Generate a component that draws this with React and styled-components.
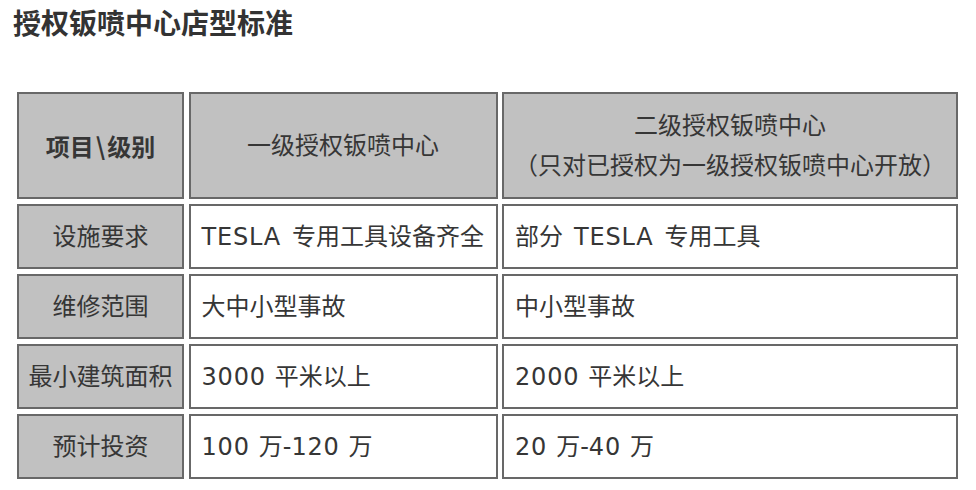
import React from "react";
import styled, { createGlobalStyle } from "styled-components";

const GlobalStyle = createGlobalStyle`
  html, body {
    margin: 0;
    padding: 0;
    background: #ffffff;
  }
  body {
    font-family: "DejaVu Sans", "Noto Sans CJK SC", sans-serif;
    color: #333333;
  }
`;

const Page = styled.div`
  width: 976px;
  height: 490px;
  box-sizing: border-box;
  padding: 2px 0 0 13px;
  overflow: hidden;
`;

const Title = styled.h1`
  margin: 0;
  font-family: "Noto Sans CJK SC", sans-serif;
  font-size: 28px;
  font-weight: 700;
  line-height: 40px;
  color: #333333;
`;

const Table = styled.div`
  display: grid;
  grid-template-columns: 167px 309px 456px;
  grid-template-rows: 107px repeat(4, 65px);
  column-gap: 4.5px;
  row-gap: 5px;
  margin: 50px 0 0 4px;
`;

const Cell = styled.div`
  box-sizing: border-box;
  border: 2px solid #686868;
  display: flex;
  flex-direction: column;
  justify-content: center;
  font-size: 24px;
  line-height: 40px;
  color: #363636;
  white-space: nowrap;
  background: ${(p) => (p.$shaded ? "#c1c1c1" : "#ffffff")};
  align-items: ${(p) => (p.$center ? "center" : "flex-start")};
  padding-left: ${(p) => (p.$center ? "0" : "11px")};
  font-weight: ${(p) => (p.$bold ? 700 : 400)};
  font-family: ${(p) =>
    p.$bold ? '"Noto Sans CJK SC", sans-serif' : '"DejaVu Sans", "Noto Sans CJK SC", sans-serif'};
`;

const Latin = styled.span`
  letter-spacing: 0.8px;
  margin-right: ${(p) => (p.$num ? "9px" : "11px")};
  margin-left: ${(p) => (p.$lead ? "11px" : "0")};
`;

const Slash = styled.span`
  margin: 0 2px;
`;

const rows = [
  {
    label: "设施要求",
    a: [<Latin key="t">TESLA</Latin>, "专用工具设备齐全"],
    b: ["部分", <Latin key="t" $lead>TESLA</Latin>, "专用工具"],
  },
  { label: "维修范围", a: ["大中小型事故"], b: ["中小型事故"] },
  {
    label: "最小建筑面积",
    a: [<Latin key="n" $num>3000</Latin>, "平米以上"],
    b: [<Latin key="n" $num>2000</Latin>, "平米以上"],
  },
  {
    label: "预计投资",
    a: [<Latin key="n" $num>100</Latin>, "万-", <Latin key="m" $num>120</Latin>, "万"],
    b: [<Latin key="n" $num>20</Latin>, "万-", <Latin key="m" $num>40</Latin>, "万"],
  },
];

export default function App() {
  return (
    <>
      <GlobalStyle />
      <Page>
        <Title>授权钣喷中心店型标准</Title>
        <Table>
          <Cell $shaded $center $bold>
            <div>
              项目<Slash>\</Slash>级别
            </div>
          </Cell>
          <Cell $shaded $center>一级授权钣喷中心</Cell>
          <Cell $shaded $center>
            <div>二级授权钣喷中心</div>
            <div>（只对已授权为一级授权钣喷中心开放）</div>
          </Cell>
          {rows.map((r) => (
            <React.Fragment key={r.label}>
              <Cell $shaded $center>{r.label}</Cell>
              <Cell>
                <div>{r.a}</div>
              </Cell>
              <Cell>
                <div>{r.b}</div>
              </Cell>
            </React.Fragment>
          ))}
        </Table>
      </Page>
    </>
  );
}
